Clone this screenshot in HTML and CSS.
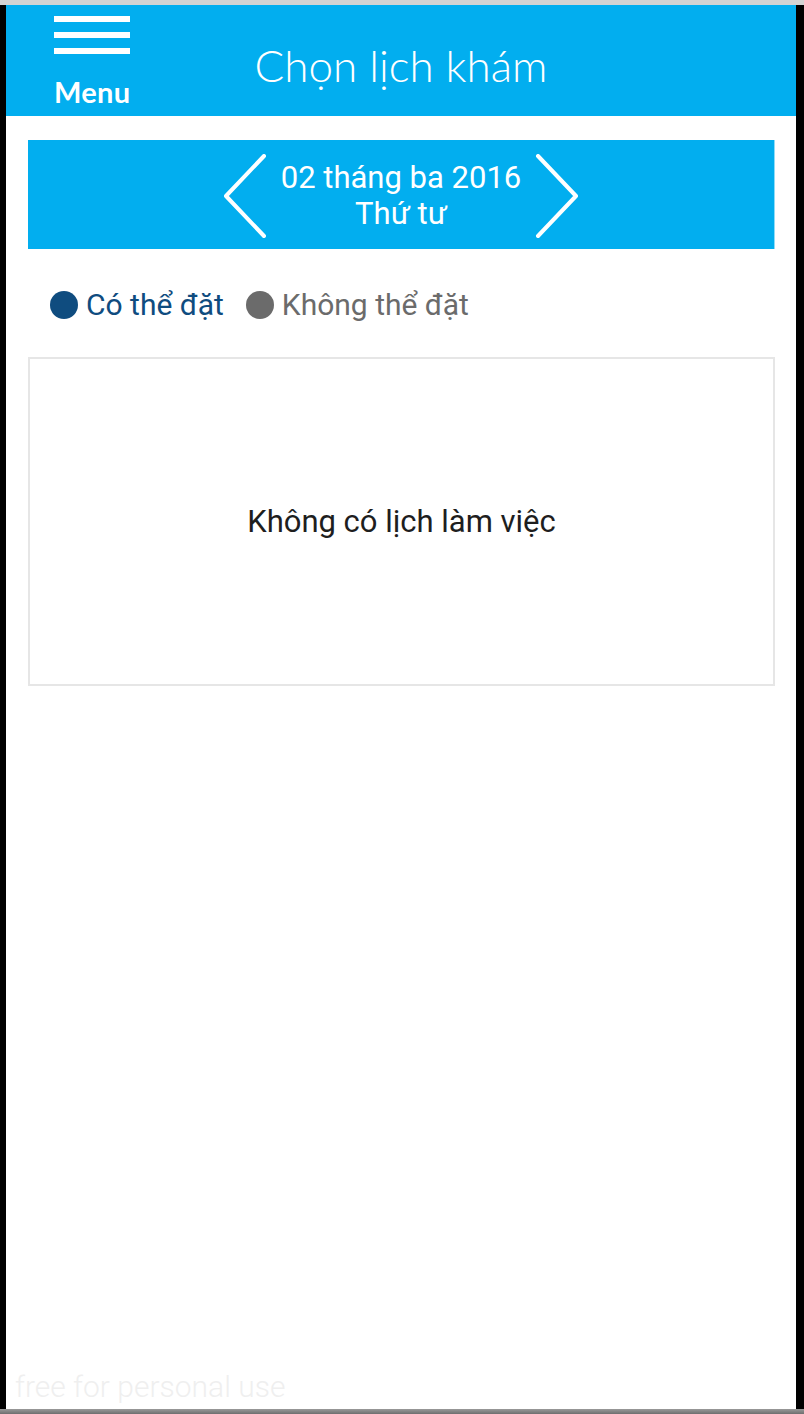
FILE: index.html
```html
<!DOCTYPE html>
<html lang="vi">
<head>
<meta charset="utf-8">
<title>Chọn lịch khám</title>
<link rel="stylesheet" href="styles.css">
</head>
<body>
<div class="frame-top"></div>
<div class="frame-row">
  <div class="side side-left"></div>
  <main class="app">
    <header class="header">
      <div class="menu">
        <div class="burger"><span></span><span></span><span></span></div>
        <div class="menu-label">Menu</div>
      </div>
      <h1 class="title">Chọn lịch khám</h1>
      <div class="spacer"></div>
    </header>

    <section class="datebar">
      <svg class="chev" width="46" height="84" viewBox="0 0 46 84"><polyline points="42,2 4,42 42,82" fill="none" stroke="#fff" stroke-width="4" stroke-linecap="round" stroke-linejoin="round"/></svg>
      <div class="date-text">
        <div class="date-line">02 tháng ba 2016</div>
        <div class="date-line">Thứ tư</div>
      </div>
      <svg class="chev" width="46" height="84" viewBox="0 0 46 84"><polyline points="4,2 42,42 4,82" fill="none" stroke="#fff" stroke-width="4" stroke-linecap="round" stroke-linejoin="round"/></svg>
    </section>

    <div class="legend">
      <div class="legend-item avail"><span class="dot"></span>Có thể đặt</div>
      <div class="legend-item unavail"><span class="dot"></span>Không thể đặt</div>
    </div>

    <section class="schedule">
      <p class="empty">Không có lịch làm việc</p>
    </section>

    <footer class="watermark">free for personal use</footer>
  </main>
  <div class="side side-right"></div>
</div>
<div class="frame-bottom"></div>
</body>
</html>
```

FILE: styles.css
```css
html, body {
  margin: 0;
  padding: 0;
}
body {
  width: 804px;
  height: 1414px;
  background: #000;
  display: flex;
  flex-direction: column;
  overflow: hidden;
  font-family: Roboto, "Liberation Sans", sans-serif;
}
.frame-top {
  height: 5px;
  background: #d3d3d3;
  flex: none;
}
.frame-bottom {
  height: 5px;
  background: linear-gradient(#9a9a9a, #6e6e6e);
  flex: none;
}
.frame-row {
  flex: 1;
  display: flex;
}
.side-left { width: 6px; background: #000; }
.side-right { width: 8px; background: #000; }
.app {
  width: 790px;
  background: #fff;
  display: flex;
  flex-direction: column;
}
.header {
  height: 111px;
  background: #02aeef;
  display: grid;
  grid-template-columns: 1fr auto 1fr;
  align-items: start;
  color: #fff;
}
.menu {
  padding: 11px 0 0 48px;
  width: 76px;
}
.burger {
  display: flex;
  flex-direction: column;
  gap: 10px;
}
.burger span {
  display: block;
  width: 76px;
  height: 6px;
  background: #fff;
}
.menu-label {
  margin-top: 23px;
  font-family: Lato, "Open Sans", sans-serif;
  font-weight: 700;
  font-size: 29px;
  line-height: 30px;
  letter-spacing: 0.3px;
}
.title {
  margin: 0;
  padding-top: 32px;
  font-family: Lato, "Open Sans", sans-serif;
  font-weight: 300;
  font-size: 44px;
  line-height: 56px;
}
.datebar {
  margin: 24px 21px 0 22px;
  height: 109px;
  background: #02aeef;
  border-right: 1px solid #8fdcf8;
  display: flex;
  align-items: center;
  justify-content: center;
  gap: 13px;
  color: #fff;
}
.chev { flex: none; margin-top: 2px; }
.date-text {
  text-align: center;
  font-size: 31px;
  line-height: 36px;
  margin-top: 2px;
}
.legend {
  margin: 38px 0 0 44px;
  display: flex;
  gap: 22px;
  font-size: 30px;
  line-height: 36px;
}
.legend-item {
  display: flex;
  align-items: center;
  gap: 8px;
}
.dot {
  width: 28px;
  height: 28px;
  border-radius: 50%;
}
.avail { color: #0f4c7f; }
.avail .dot { background: #0f4c7f; }
.unavail { color: #6b6b6b; }
.unavail .dot { background: #6b6b6b; }
.schedule {
  margin: 34px 21px 0 22px;
  height: 325px;
  border: 2px solid #e6e6e6;
  display: flex;
  align-items: center;
  justify-content: center;
}
.empty {
  margin: 0;
  font-size: 31px;
  color: #1e1e1e;
}
.watermark {
  margin-top: auto;
  padding: 0 0 4px 9px;
  font-size: 30px;
  font-weight: 300;
  line-height: 36px;
  color: #efefef;
}
```
